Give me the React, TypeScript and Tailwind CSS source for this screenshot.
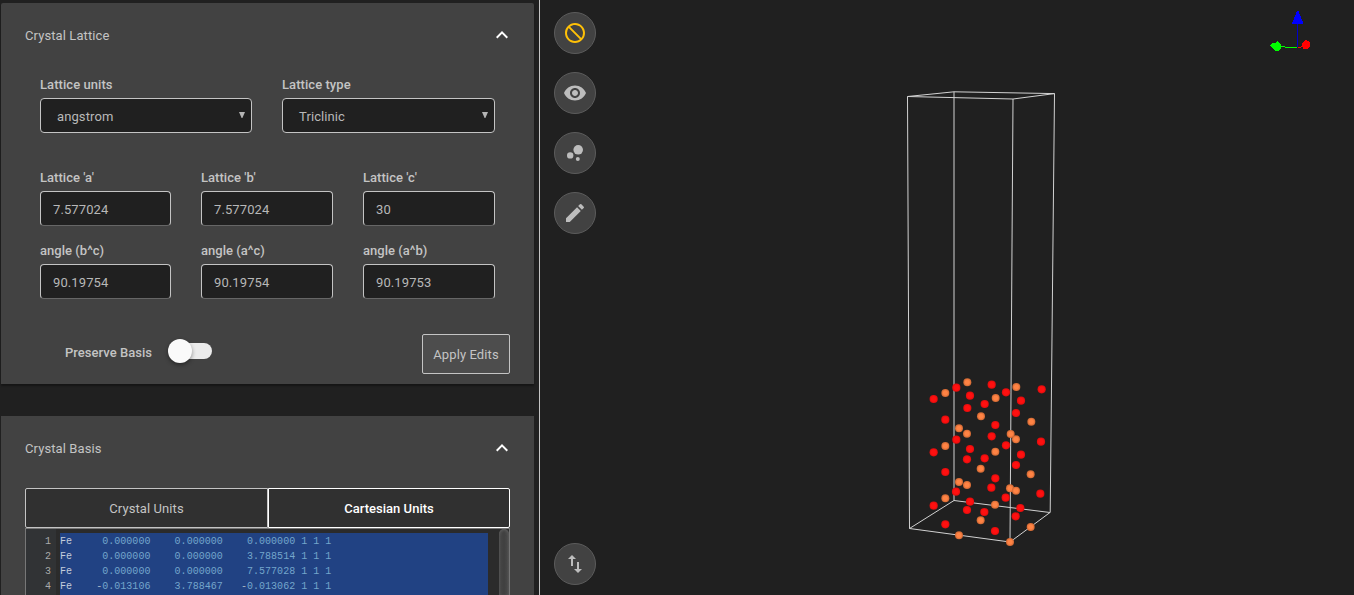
import React from "react";
import {
  MdBlock,
  MdBubbleChart,
  MdEdit,
  MdExpandLess,
  MdImportExport,
  MdVisibility,
} from "react-icons/md";

type Point = [number, number];

const IRON: Point[] = [
  [202, 37], [136, 69], [287, 84], [349, 51], [243, 139], [394, 155], [177, 175],
  [201, 191], [332, 192], [348, 208], [136, 228], [286, 245], [242, 296], [392, 313],
  [177, 336], [201, 345], [330, 355], [348, 362], [136, 385], [285, 404], [242, 451],
  [392, 471], [177, 496], [330, 516],
];

const OXYGEN: Point[] = [
  [169, 53], [101, 87], [210, 77], [275, 44], [318, 67], [425, 58], [254, 102],
  [363, 92], [202, 114], [348, 129], [136, 149], [286, 165], [275, 199], [169, 209],
  [423, 215], [318, 226], [101, 247], [210, 237], [201, 268], [254, 265], [363, 254],
  [348, 285], [136, 306], [286, 325], [274, 353], [168, 365], [317, 383], [421, 371],
  [101, 407], [210, 395], [201, 420], [253, 426], [361, 414], [347, 439], [136, 463],
  [285, 483],
];

const ROWS: string[][] = [
  ["0.000000", "0.000000", "0.000000"],
  ["0.000000", "0.000000", "3.788514"],
  ["0.000000", "0.000000", "7.577028"],
  ["-0.013106", "3.788467", "-0.013062"],
];

function PanelHeader({ title }: { title: string }) {
  return (
    <div className="flex h-16 items-center justify-between pl-6 pr-5">
      <span className="pt-0.5">{title}</span>
      <MdExpandLess className="size-6 text-white" />
    </div>
  );
}

function SelectField({ label, value }: { label: string; value: string }) {
  return (
    <div>
      <div className="h-[22px] pt-px font-medium leading-4 tracking-[0.06px]">{label}</div>
      <div className="flex h-[35px] items-center justify-between rounded border border-[#c4c4c4] bg-[#202020] pl-4 pr-1.5 pt-0.5 text-[#b8b8b8]">
        <span>{value}</span>
        <svg className="mb-[3px] h-1.5 w-1.5" viewBox="0 0 6 6">
          <path d="M0 0h6L3.4 6h-.8z" fill="#b5b5b5" />
        </svg>
      </div>
    </div>
  );
}

function NumberField({ label, value }: { label: string; value: string }) {
  return (
    <div>
      <div className="h-[22px] pt-px font-medium leading-4 tracking-[0.03px]">{label}</div>
      <div className="flex h-[35px] items-center rounded border border-[#c4c4c4] border-b-[#666] bg-[#202020] pl-3 pt-0.5 text-[#b8b8b8]">
        {value}
      </div>
    </div>
  );
}

function RoundButton({ children, className = "text-[#bdbdbd]" }: { children: React.ReactNode; className?: string }) {
  return (
    <button
      className={`flex size-[42px] items-center justify-center rounded-full border border-[#5c5c5c] bg-[#424242] ${className}`}
    >
      {children}
    </button>
  );
}

function Coordinate({ value, width }: { value: string; width: number }) {
  const negative = value.startsWith("-");
  return (
    <>
      {" ".repeat(width - value.length)}
      {negative && <span className="text-[#a9b7c6]">-</span>}
      {negative ? value.slice(1) : value}
    </>
  );
}

function Editor() {
  return (
    <div className="flex flex-1 border-x border-t border-[#777] bg-[#2b2b2b] font-['Liberation_Mono',monospace] text-[10px] leading-[15px] tracking-[0.03px]">
      <div className="w-[30px] bg-[#313335] pr-[5px] pt-[5px] text-right text-[#aaa]">
        {ROWS.map((_, i) => (
          <div key={i}>{i + 1}</div>
        ))}
      </div>
      <div className="ml-1 mt-1 w-[428px] bg-[#214283] pt-px text-[#74a6cc]">
        {ROWS.map((row, i) => (
          <div key={i} className="whitespace-pre">
            <span className="text-[#c3cddb]">Fe</span>
            <Coordinate value={row[0]} width={13} />
            <Coordinate value={row[1]} width={12} />
            <Coordinate value={row[2]} width={12} />
            {" 1 1 1"}
          </div>
        ))}
      </div>
      <div className="ml-auto w-2.5 rounded-t-[5px] bg-linear-to-r from-[#484848] via-[#404040] to-[#4c4c4c] shadow-[inset_0_1px_3px_#606060]" />
    </div>
  );
}

function LatticePanel() {
  return (
    <section className="h-[381px] rounded-t-xs bg-[#424242] shadow-[0_2px_2px_rgba(0,0,0,0.35)]">
      <PanelHeader title="Crystal Lattice" />
      <div className="grid grid-cols-[212px_213px] gap-[30px] pl-[39px] pt-[9px]">
        <SelectField label="Lattice units" value="angstrom" />
        <SelectField label="Lattice type" value="Triclinic" />
      </div>
      <div className="grid grid-cols-[131px_132px_132px] gap-[30px] pl-[39px] pt-9">
        <NumberField label="Lattice 'a'" value="7.577024" />
        <NumberField label="Lattice 'b'" value="7.577024" />
        <NumberField label="Lattice 'c'" value="30" />
      </div>
      <div className="grid grid-cols-[131px_132px_132px] gap-[30px] pl-[39px] pt-4">
        <NumberField label="angle (b^c)" value="90.19754" />
        <NumberField label="angle (a^c)" value="90.19754" />
        <NumberField label="angle (a^b)" value="90.19753" />
      </div>
      <div className="flex items-start justify-between pl-16 pr-6 pt-[35px]">
        <div className="flex items-center gap-[15px] pt-[5px]">
          <span className="w-[88px] whitespace-nowrap pt-[3px] font-medium tracking-[0.03px]">Preserve Basis</span>
          <span className="flex h-6 w-11 items-center">
            <span className="z-10 size-6 shrink-0 rounded-full bg-[#fafafa] shadow-[0_2px_4px_rgba(0,0,0,0.4)]" />
            <span className="-ml-3 h-4 w-8 shrink-0 rounded-r-full bg-[#ebebeb]" />
          </span>
        </div>
        <button className="h-10 w-[88px] rounded-xs border border-[#c4c4c4] bg-[#4d4d4d] pt-0.5">
          Apply Edits
        </button>
      </div>
    </section>
  );
}

function BasisPanel() {
  return (
    <section className="flex flex-1 flex-col bg-[#424242]">
      <PanelHeader title="Crystal Basis" />
      <div className="flex flex-1 flex-col px-6 pt-2">
        <div className="flex h-10">
          <button className="w-[243px] rounded-l-xs border border-[#c4c4c4] bg-[#303030] pt-0.5">
            Crystal Units
          </button>
          <button className="flex-1 rounded-r-xs border border-white bg-[#303030] pt-0.5 font-medium tracking-[0.03px] text-white">
            Cartesian Units
          </button>
        </div>
        <Editor />
      </div>
    </section>
  );
}

function Scene() {
  return (
    <svg className="absolute inset-0 h-full w-full" viewBox="540 0 814 595">
      <defs>
        <radialGradient id="iron">
          <stop offset="0.5" stopColor="#ff8344" />
          <stop offset="1" stopColor="#cc6733" />
        </radialGradient>
        <radialGradient id="oxygen">
          <stop offset="0.55" stopColor="#ff1010" />
          <stop offset="1" stopColor="#df0b0b" />
        </radialGradient>
      </defs>
      <g fill="none" stroke="#d2d2d2" strokeWidth="1">
        <path d="M907.5 96.5 954 91.8l100.5 1.8L1013 99z" />
        <path d="M909.5 528.5 954 500.5l96 12L1010 542z" />
        <path d="M907.5 96.5l2 432M954 91.8v408.7M1054.5 93.6l-4.3 419M1013 99l-3 443" />
      </g>
      <g transform="translate(900 370) scale(0.33333)">
        {OXYGEN.map(([x, y]) => (
          <circle key={`${x}-${y}`} cx={x} cy={y} r="12.3" fill="url(#oxygen)" />
        ))}
        {IRON.map(([x, y]) => (
          <circle key={`${x}-${y}`} cx={x} cy={y} r="12" fill="url(#iron)" />
        ))}
      </g>
      <g shapeRendering="crispEdges">
        <path d="M1297.5 23v24" stroke="#0000c8" />
        <path d="M1297 11h1.500l5 12.500h-11.500z" fill="#00f" />
        <path d="M1280 46.500h5M1285 47.500h12" stroke="#0f0" />
        <path d="M1298 47.500h3M1301 46.500h3" stroke="#f00" fill="none" />
        <path d="M1270 45.500l3-2.500h2l2.500-2 3 3 .5 4-3 3h-2.500l-3.500-3z" fill="#0f0" />
        <path d="M1306 39.500l4 3-.5 5-2 1.500h-4.500l-1.500-5z" fill="#f00" />
      </g>
    </svg>
  );
}

export default function App() {
  return (
    <div className="flex h-[595px] w-[1354px] overflow-hidden bg-[#202020] font-['Roboto',sans-serif] text-[13px] tracking-[0.1px] text-[#c4c4c4]">
      <aside className="isolate flex w-[540px] flex-col gap-8 border-r border-[#c4c4c4] pl-px pr-[5px] pt-[3px]">
        <LatticePanel />
        <BasisPanel />
      </aside>
      <main className="relative flex-1">
        <Scene />
        <div className="relative flex h-full flex-col justify-between pb-2.5 pl-3.5 pt-3">
          <div className="flex flex-col gap-[18px]">
            <RoundButton className="text-[#ffc107]">
              <MdBlock className="size-6 -scale-x-100" />
            </RoundButton>
            <RoundButton>
              <MdVisibility className="size-6" />
            </RoundButton>
            <RoundButton>
              <MdBubbleChart className="size-6" />
            </RoundButton>
            <RoundButton>
              <MdEdit className="size-6" />
            </RoundButton>
          </div>
          <RoundButton>
            <MdImportExport className="size-6" />
          </RoundButton>
        </div>
      </main>
    </div>
  );
}
